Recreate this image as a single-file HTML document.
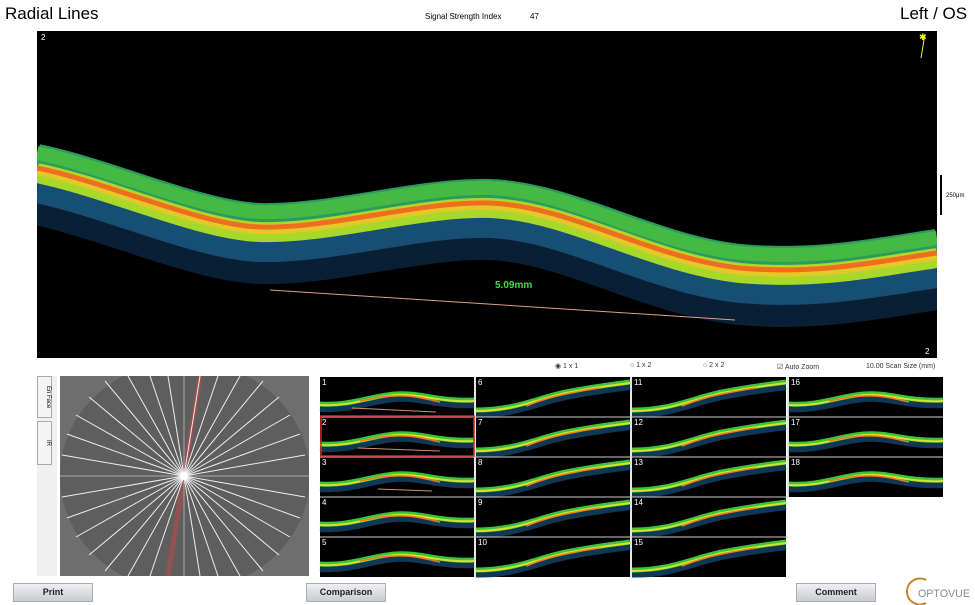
<!DOCTYPE html>
<html><head><meta charset="utf-8"><style>
body{margin:0;width:975px;height:605px;background:#fff;position:relative;overflow:hidden;font-family:"Liberation Sans",sans-serif}
.a{position:absolute}
.btn{position:absolute;height:17px;background:linear-gradient(#eef0f2,#c8ccd0);border:1px solid #aab;font-size:9px;font-weight:bold;text-align:center;line-height:17px;color:#222}
.s{font-size:7px;color:#333}
</style></head><body>
<div class="a" style="left:5px;top:4px;font-size:17px">Radial Lines</div>
<div class="a" style="left:425px;top:12px;font-size:8px">Signal Strength Index</div>
<div class="a" style="left:530px;top:12px;font-size:8px">47</div>
<div class="a" style="left:900px;top:4px;font-size:17px">Left / OS</div>
<svg class="a" style="left:0;top:0" width="975" height="605">
<defs>
<clipPath id="mc"><rect x="37" y="31" width="900" height="327"/></clipPath>
<clipPath id="fc"><rect x="60" y="376" width="249" height="200"/></clipPath>
<path id="c" d="M37,165 C110,180 200,222 260,224 C330,226 420,198 490,200 C570,203 650,255 740,265 C820,272 880,258 937,250"/>
<g id="th">
<rect width="154" height="40" fill="#000"/>
<path d="M0,31 C30,33 50,23 75,21 C100,19 120,29 154,27" fill="none" stroke="#1b5c8a" stroke-width="8" opacity=".6"/>
<path d="M0,27 C30,29 50,19 75,17 C100,15 120,25 154,23" fill="none" stroke="#3cc43c" stroke-width="5"/>
<path d="M0,28 C30,30 50,20 75,18 C100,16 120,26 154,24" fill="none" stroke="#d8e02a" stroke-width="2"/>
<path d="M40,24 C55,21 65,19 75,19 C95,18 110,23 120,25" fill="none" stroke="#f07a20" stroke-width="1.5"/>
</g>
<g id="tr">
<rect width="154" height="40" fill="#000"/>
<path d="M0,37 C40,37 60,25 90,19 C120,13 140,11 154,9" fill="none" stroke="#1b5c8a" stroke-width="8" opacity=".6"/>
<path d="M0,33 C40,33 60,21 90,15 C120,9 140,7 154,5" fill="none" stroke="#3cc43c" stroke-width="5"/>
<path d="M0,34 C40,34 60,22 90,16 C120,10 140,8 154,6" fill="none" stroke="#d8e02a" stroke-width="2"/>
<path d="M50,29 C60,25 75,20 90,17 C105,14 115,12 125,11" fill="none" stroke="#f07a20" stroke-width="1.5"/>
</g>
</defs>
<rect x="37" y="31" width="900" height="327" fill="#000"/>
<g fill="none" clip-path="url(#mc)">
<use href="#c" transform="translate(0,30)" stroke="#0f3358" stroke-width="60" opacity=".6"/>
<use href="#c" transform="translate(0,20)" stroke="#1d6290" stroke-width="36" opacity=".7"/>
<use href="#c" transform="translate(0,-6)" stroke="#2b9a60" stroke-width="30"/>
<use href="#c" transform="translate(0,-12)" stroke="#46b844" stroke-width="14"/>
<use href="#c" transform="translate(0,8)" stroke="#a8d82a" stroke-width="20"/>
<use href="#c" transform="translate(0,5)" stroke="#e4c828" stroke-width="10"/>
<use href="#c" transform="translate(0,3)" stroke="#ee6e20" stroke-width="5"/>
</g>
<path d="M270,290 L735,320" stroke="#e0a080" stroke-width="1"/>
<text x="495" y="288" fill="#4ad94a" font-size="10" font-weight="bold" font-family="Liberation Sans">5.09mm</text>
<text x="41" y="40" fill="#fff" font-size="8">2</text>
<text x="925" y="354" fill="#fff" font-size="8">2</text>
<path d="M925,34 L921,58" stroke="#ee4" stroke-width="1"/><text x="919" y="40" fill="#ff0" font-size="9">✱</text>
<rect x="940" y="175" width="2" height="40" fill="#000"/>
<text x="946" y="197" font-size="6" fill="#000">250μm</text>
<g clip-path="url(#fc)">
<rect x="60" y="376" width="249" height="200" fill="#6e6e6e"/>
<ellipse cx="185" cy="476" rx="125" ry="115" fill="#5e5e5e"/>
<path d="M200,376 L168,576" stroke="#a05050" stroke-width="5" opacity=".8"/>
<line x1="60" y1="476" x2="309" y2="476" stroke="#aaa" stroke-width="1"/>
<line x1="184" y1="376" x2="184" y2="576" stroke="#aaa" stroke-width="1"/>
<g stroke="#eee" stroke-width="1">
<line x1="184" y1="476" x2="263" y2="381"/><line x1="184" y1="476" x2="279" y2="397"/><line x1="184" y1="476" x2="290" y2="415"/><line x1="184" y1="476" x2="300" y2="434"/><line x1="184" y1="476" x2="305" y2="455"/><line x1="184" y1="476" x2="305" y2="497"/><line x1="184" y1="476" x2="300" y2="518"/><line x1="184" y1="476" x2="290" y2="537"/><line x1="184" y1="476" x2="279" y2="555"/><line x1="184" y1="476" x2="263" y2="571"/>
<line x1="184" y1="476" x2="105" y2="571"/><line x1="184" y1="476" x2="89" y2="555"/><line x1="184" y1="476" x2="76" y2="537"/><line x1="184" y1="476" x2="67" y2="518"/><line x1="184" y1="476" x2="62" y2="497"/><line x1="184" y1="476" x2="62" y2="455"/><line x1="184" y1="476" x2="67" y2="434"/><line x1="184" y1="476" x2="76" y2="415"/><line x1="184" y1="476" x2="89" y2="397"/><line x1="184" y1="476" x2="105" y2="381"/>
<line x1="184" y1="476" x2="128" y2="376"/><line x1="184" y1="476" x2="150" y2="376"/><line x1="184" y1="476" x2="168" y2="376"/><line x1="184" y1="476" x2="200" y2="376"/><line x1="184" y1="476" x2="218" y2="376"/><line x1="184" y1="476" x2="240" y2="376"/>
<line x1="184" y1="476" x2="128" y2="576"/><line x1="184" y1="476" x2="150" y2="576"/><line x1="184" y1="476" x2="200" y2="576"/><line x1="184" y1="476" x2="218" y2="576"/><line x1="184" y1="476" x2="240" y2="576"/>
</g>
<circle cx="184" cy="476" r="4" fill="#fff"/>
</g>
<g>
<use href="#th" x="320" y="377"/><use href="#th" x="320" y="417"/><use href="#th" x="320" y="457"/><use href="#th" x="320" y="497"/><use href="#th" x="320" y="537"/>
<use href="#tr" x="476" y="377"/><use href="#tr" x="476" y="417"/><use href="#tr" x="476" y="457"/><use href="#tr" x="476" y="497"/><use href="#tr" x="476" y="537"/>
<use href="#tr" x="632" y="377"/><use href="#tr" x="632" y="417"/><use href="#tr" x="632" y="457"/><use href="#tr" x="632" y="497"/><use href="#tr" x="632" y="537"/>
<use href="#th" x="789" y="377"/><use href="#th" x="789" y="417"/><use href="#th" x="789" y="457"/>
</g>
<g stroke="#ccc" stroke-width="1" fill="none">
<line x1="320" y1="417" x2="943" y2="417"/><line x1="320" y1="457" x2="943" y2="457"/><line x1="320" y1="497" x2="788" y2="497"/><line x1="320" y1="537" x2="788" y2="537"/>
<line x1="475" y1="377" x2="475" y2="577"/><line x1="631" y1="377" x2="631" y2="577"/><line x1="788" y1="377" x2="788" y2="497"/>
</g>
<rect x="321" y="416" width="153" height="40" fill="none" stroke="#d22" stroke-width="1.5"/>
<g fill="#fff" font-size="8">
<text x="322" y="385">1</text><text x="322" y="425">2</text><text x="322" y="465">3</text><text x="322" y="505">4</text><text x="322" y="545">5</text>
<text x="478" y="385">6</text><text x="478" y="425">7</text><text x="478" y="465">8</text><text x="478" y="505">9</text><text x="478" y="545">10</text>
<text x="634" y="385">11</text><text x="634" y="425">12</text><text x="634" y="465">13</text><text x="634" y="505">14</text><text x="634" y="545">15</text>
<text x="791" y="385">16</text><text x="791" y="425">17</text><text x="791" y="465">18</text>
</g>
<g stroke="#d09070" stroke-width="1"><line x1="352" y1="408" x2="436" y2="412"/><line x1="358" y1="448" x2="440" y2="451"/><line x1="378" y1="489" x2="432" y2="491"/></g>
<path d="M926,580 A13,13 0 1,0 926,603" fill="none" stroke="#c8842a" stroke-width="2"/>
<text x="918" y="597" font-size="11" fill="#8a8a8a" font-family="Liberation Sans" textLength="52" lengthAdjust="spacingAndGlyphs">OPTOVUE</text>
</svg>
<div class="a" style="left:37px;top:376px;width:20px;height:200px;background:#f0f0f0"></div>
<div class="a" style="left:37px;top:376px;width:13px;height:40px;border:1px solid #aaa;background:#f4f4f4;font-size:6px;writing-mode:vertical-rl;text-align:center">En Face</div>
<div class="a" style="left:37px;top:421px;width:13px;height:42px;border:1px solid #aaa;background:#f4f4f4;font-size:6px;writing-mode:vertical-rl;text-align:center">IR</div>
<div class="a s" style="left:555px;top:362px">◉ 1 x 1</div>
<div class="a s" style="left:630px;top:362px">○ 1 x 2</div>
<div class="a s" style="left:703px;top:362px">○ 2 x 2</div>
<div class="a s" style="left:777px;top:363px">☑ Auto Zoom</div>
<div class="a s" style="left:866px;top:363px">10.00 Scan Size (mm)</div>
<div class="btn" style="left:13px;top:583px;width:78px">Print</div>
<div class="btn" style="left:306px;top:583px;width:78px">Comparison</div>
<div class="btn" style="left:796px;top:583px;width:78px">Comment</div>
</body></html>
